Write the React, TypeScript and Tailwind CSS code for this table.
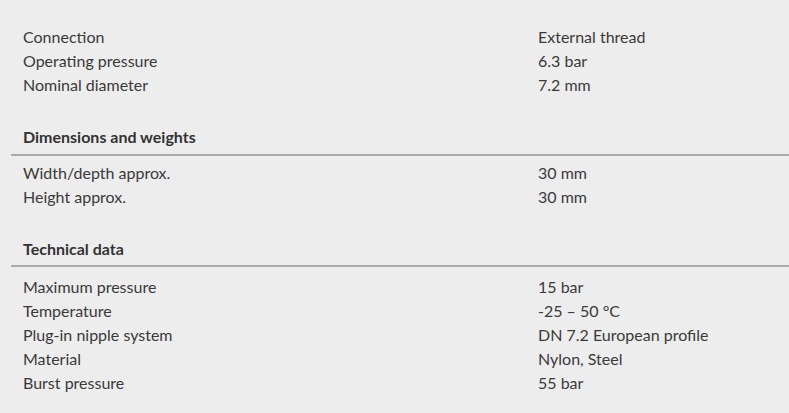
import React from 'react';

type Row = { label: string; value: string };
type Section = { title?: string; rows: Row[]; headClass?: string };

const sections: Section[] = [
  {
    rows: [
      { label: 'Connection', value: 'External thread' },
      { label: 'Operating pressure', value: '6.3 bar' },
      { label: 'Nominal diameter', value: '7.2 mm' },
    ],
  },
  {
    title: 'Dimensions and weights',
    headClass: 'pb-[5px] mb-[5px]',
    rows: [
      { label: 'Width/depth approx.', value: '30 mm' },
      { label: 'Height approx.', value: '30 mm' },
    ],
  },
  {
    title: 'Technical data',
    headClass: 'pb-[4px] mb-[8px]',
    rows: [
      { label: 'Maximum pressure', value: '15 bar' },
      { label: 'Temperature', value: '-25 – 50 °C' },
      { label: 'Plug-in nipple system', value: 'DN 7.2 European profile' },
      { label: 'Material', value: 'Nylon, Steel' },
      { label: 'Burst pressure', value: '55 bar' },
    ],
  },
];

const App: React.FC = () => {
  return (
    <div
      className="w-[789px] h-[413px] bg-[#ededed] text-[#3a3a3a] pt-[25px] pl-[11px] overflow-hidden"
      style={{ fontFamily: 'Lato, "Open Sans", sans-serif' }}
    >
      {sections.map((section, i) => (
        <div key={i} className={i > 0 ? 'mt-[28px]' : ''}>
          {section.title && (
            <div className={`${section.headClass} border-b-2 border-[#aaaaaa]`}>
              <h3 className="pl-3 text-[16px] leading-6 font-bold text-[#333333]">{section.title}</h3>
            </div>
          )}
          {section.rows.map((row) => (
            <div key={row.label} className="grid grid-cols-[527px_1fr] text-[16px] leading-6">
              <div className="pl-3">{row.label}</div>
              <div>{row.value}</div>
            </div>
          ))}
        </div>
      ))}
    </div>
  );
};

export default App;
